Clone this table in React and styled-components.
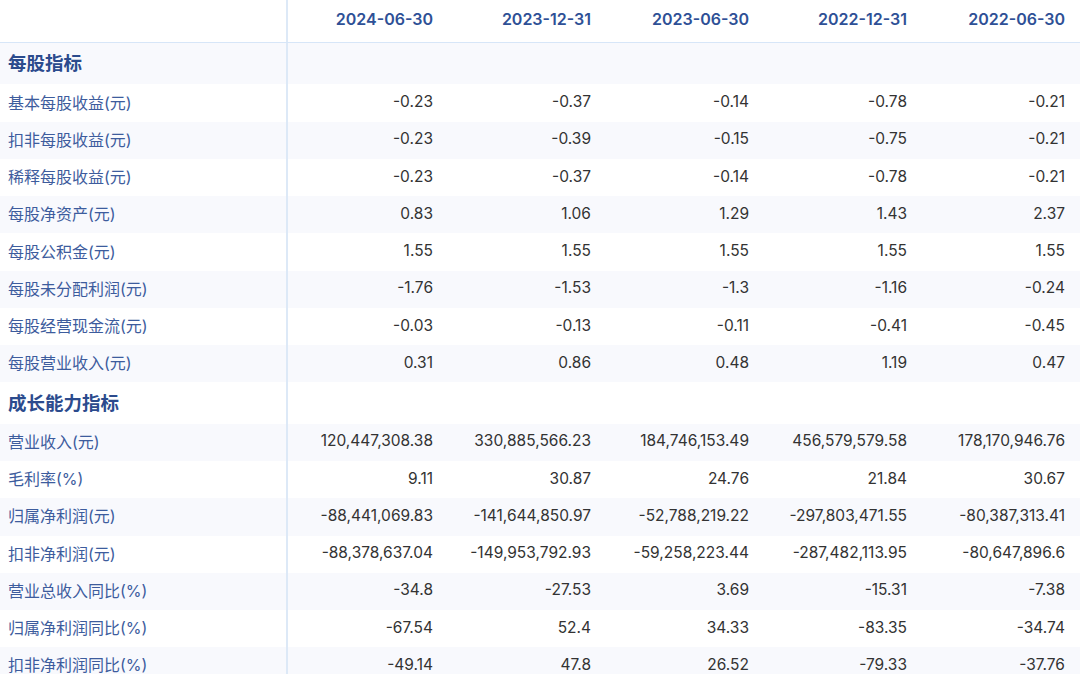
import React from "react";
import styled, { createGlobalStyle } from "styled-components";

const GlobalStyle = createGlobalStyle`
  html, body {
    margin: 0;
    padding: 0;
    background: #ffffff;
  }
  body {
    font-family: Inter, "Noto Sans CJK SC", "Noto Sans", sans-serif;
    overflow: hidden;
  }
`;

const Table = styled.div`
  width: 1080px;
  display: flex;
  flex-direction: column;
`;

const Row = styled.div`
  display: grid;
  grid-template-columns: 288px repeat(5, 158px);
  height: ${(p) => (p.$head ? "43px" : p.$section ? "41.4px" : "37.25px")};
  box-sizing: border-box;
  background: ${(p) => (p.$band ? "#f8f9fd" : "#ffffff")};
  border-bottom: ${(p) => (p.$head ? "1px solid #d7e6f8" : "none")};
`;

const HeadCell = styled.div`
  display: flex;
  align-items: center;
  justify-content: flex-end;
  padding: 0 13px 5px 0;
  font-size: 16px;
  font-weight: 600;
  color: #2e5096;
`;

const LabelCell = styled.div`
  display: flex;
  align-items: center;
  padding: 0 0 3px 8px;
  border-right: 2px solid #dde9f7;
  font-size: ${(p) => (p.$section ? "18.5px" : "16px")};
  font-weight: ${(p) => (p.$section ? 700 : 400)};
  color: ${(p) => (p.$section ? "#2b4b8d" : "#3d5c9d")};
`;

const ValueCell = styled.div`
  display: flex;
  align-items: center;
  justify-content: flex-end;
  padding: 0 13px 3px 0;
  font-size: 15.5px;
  color: #333333;
`;

const dates = ["2024-06-30", "2023-12-31", "2023-06-30", "2022-12-31", "2022-06-30"];

const rows = [
  { section: "每股指标" },
  { label: "基本每股收益(元)", values: ["-0.23", "-0.37", "-0.14", "-0.78", "-0.21"] },
  { label: "扣非每股收益(元)", values: ["-0.23", "-0.39", "-0.15", "-0.75", "-0.21"] },
  { label: "稀释每股收益(元)", values: ["-0.23", "-0.37", "-0.14", "-0.78", "-0.21"] },
  { label: "每股净资产(元)", values: ["0.83", "1.06", "1.29", "1.43", "2.37"] },
  { label: "每股公积金(元)", values: ["1.55", "1.55", "1.55", "1.55", "1.55"] },
  { label: "每股未分配利润(元)", values: ["-1.76", "-1.53", "-1.3", "-1.16", "-0.24"] },
  { label: "每股经营现金流(元)", values: ["-0.03", "-0.13", "-0.11", "-0.41", "-0.45"] },
  { label: "每股营业收入(元)", values: ["0.31", "0.86", "0.48", "1.19", "0.47"] },
  { section: "成长能力指标" },
  { label: "营业收入(元)", values: ["120,447,308.38", "330,885,566.23", "184,746,153.49", "456,579,579.58", "178,170,946.76"] },
  { label: "毛利率(%)", values: ["9.11", "30.87", "24.76", "21.84", "30.67"] },
  { label: "归属净利润(元)", values: ["-88,441,069.83", "-141,644,850.97", "-52,788,219.22", "-297,803,471.55", "-80,387,313.41"] },
  { label: "扣非净利润(元)", values: ["-88,378,637.04", "-149,953,792.93", "-59,258,223.44", "-287,482,113.95", "-80,647,896.6"] },
  { label: "营业总收入同比(%)", values: ["-34.8", "-27.53", "3.69", "-15.31", "-7.38"] },
  { label: "归属净利润同比(%)", values: ["-67.54", "52.4", "34.33", "-83.35", "-34.74"] },
  { label: "扣非净利润同比(%)", values: ["-49.14", "47.8", "26.52", "-79.33", "-37.76"] },
];

export default function App() {
  return (
    <>
      <GlobalStyle />
      <Table>
        <Row $head>
          <LabelCell />
          {dates.map((d) => (
            <HeadCell key={d}>{d}</HeadCell>
          ))}
        </Row>
        {rows.map((row, i) => {
          const band = i % 2 === 0;
          if (row.section) {
            return (
              <Row key={row.section} $section $band={band}>
                <LabelCell $section>{row.section}</LabelCell>
              </Row>
            );
          }
          return (
            <Row key={row.label} $band={band}>
              <LabelCell>{row.label}</LabelCell>
              {row.values.map((v, j) => (
                <ValueCell key={j}>{v}</ValueCell>
              ))}
            </Row>
          );
        })}
      </Table>
    </>
  );
}
